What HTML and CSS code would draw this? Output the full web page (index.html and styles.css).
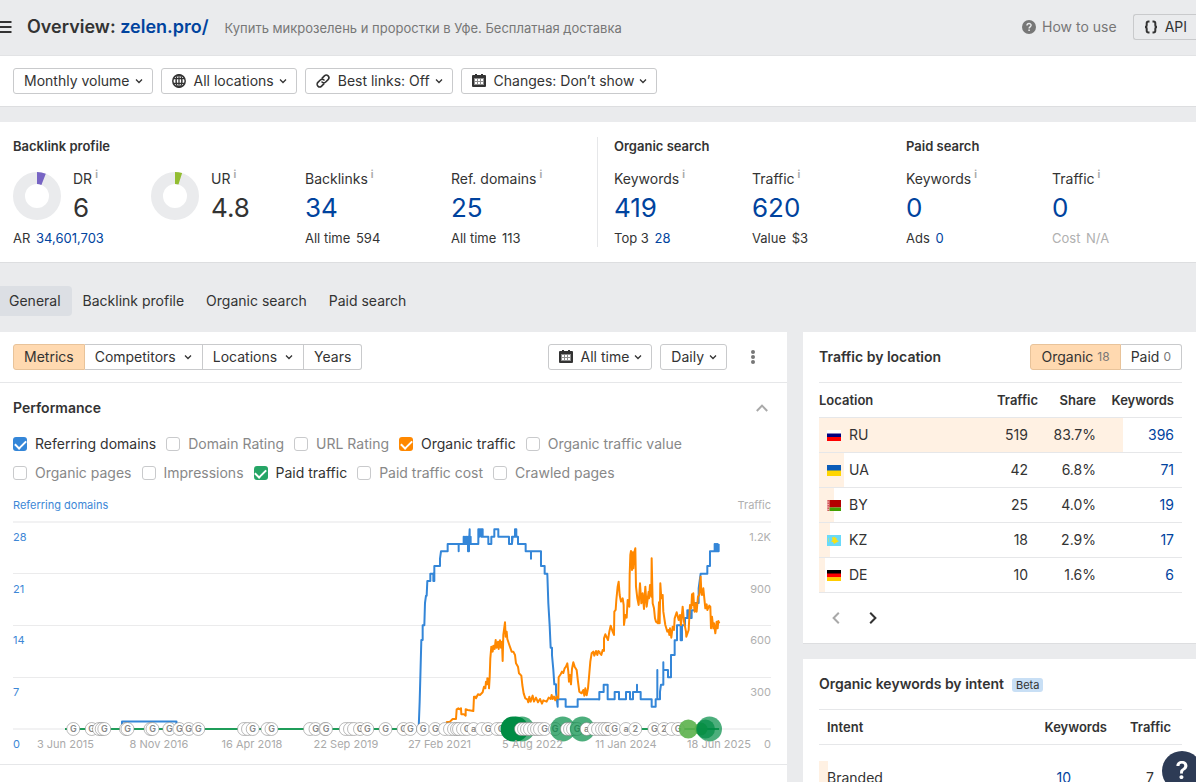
FILE: index.html
```html
<!DOCTYPE html>
<html lang="en">
<head>
<meta charset="utf-8">
<title>Overview: zelen.pro/</title>
<link rel="stylesheet" href="styles.css">
</head>
<body>
<svg class="sprite" aria-hidden="true">
  <symbol id="chev" viewBox="0 0 8 8"><path d="M1 2.5 4 5.5 7 2.5" fill="none" stroke="currentColor" stroke-width="1.3"/></symbol>
  <symbol id="calendar" viewBox="0 0 14 14"><path fill="currentColor" d="M3 0h2v1h4V0h2v1h2q1 0 1 1v10q0 1-1 1H1q-1 0-1-1V2q0-1 1-1h2z"/><path fill="#fff" d="M2 4h10v7H2z"/><path fill="currentColor" d="M2 4h10v7H2z" opacity=".55"/><path fill="#fff" d="M3 5h2v2H3zM6 5h2v2H6zM9 5h2v2H9zM3 8h2v2H3zM6 8h2v2H6zM9 8h2v2H9z"/></symbol>
</svg>

<header class="header">
  <button class="menu" aria-label="Menu"><svg width="12" height="14" viewBox="0 0 12 14"><path d="M0 2h11.500M0 7h11.500M0 12h11.500" stroke="currentColor" stroke-width="2"/></svg></button>
  <h1 class="title">Overview: <a href="#">zelen.pro/</a></h1>
  <p class="subtitle">Купить микрозелень и проростки в Уфе. Бесплатная доставка</p>
  <a class="howto" href="#"><svg width="14" height="14" viewBox="0 0 14 14"><circle cx="7" cy="7" r="7" fill="currentColor"/><path d="M5 5.500c0-2.700 4.100-2.600 4.100-.2C9.100 6.900 7.100 6.800 7.100 8.400" fill="none" stroke="#eaebed" stroke-width="1.400"/><path d="M6.300 9.600h1.600v1.500H6.300z" fill="#eaebed"/></svg>How to use</a>
  <button class="btn api"><svg width="16" height="14" viewBox="0 0 16 14"><path d="M6.500 1.500H5.500Q3.700 1.500 3.700 3.200V5Q3.700 7 2 7 3.700 7 3.700 9v1.800q0 1.700 1.800 1.700h1M9.500 1.500h1q1.800 0 1.800 1.700V5q0 2 1.700 2-1.700 0-1.700 2v1.800q0 1.700-1.800 1.700h-1" fill="none" stroke="currentColor" stroke-width="2"/></svg>API</button>
</header>

<div class="filters">
  <button class="btn">Monthly volume<svg class="chev"><use href="#chev"/></svg></button>
  <button class="btn"><svg class="icon" viewBox="0 0 14 14"><g fill="none" stroke="currentColor" stroke-width="1.500"><circle cx="7" cy="7" r="6.200"/><ellipse cx="7" cy="7" rx="2.900" ry="6.200"/><path d="M1 4.700h12M1 9.300h12M7 1v12" stroke-width="1.300"/></g></svg>All locations<svg class="chev"><use href="#chev"/></svg></button>
  <button class="btn"><svg class="icon" viewBox="0 0 14 14"><g fill="none" stroke="currentColor" stroke-width="1.600" stroke-linecap="round"><path d="M6.200 4.100 8.400 1.900a2.600 2.600 0 0 1 3.700 3.700L9.700 8a2.600 2.600 0 0 1-3.700 0"/><path d="M7.800 9.900 5.600 12.100a2.600 2.600 0 0 1-3.700-3.700L4.300 6A2.600 2.600 0 0 1 8 6"/></g></svg>Best links: Off<svg class="chev"><use href="#chev"/></svg></button>
  <button class="btn"><svg class="icon"><use href="#calendar"/></svg>Changes: Don’t show<svg class="chev"><use href="#chev"/></svg></button>
</div>

<section class="overview">
  <div class="group backlink">
    <h2>Backlink profile</h2>
    <div class="metrics">
      <div class="metric ring">
        <svg class="donut" viewBox="0 0 48 48"><circle cx="24" cy="24" r="18"/><path fill="#7764c4" d="M24 0A24 24 0 0 1 32.800 1.700L28.400 12.900A12 12 0 0 0 24 12z"/></svg>
        <div class="label">DR<span class="info">i</span></div><div class="value">6</div>
        <div class="sub">AR <a href="#">34,601,703</a></div>
      </div>
      <div class="metric ring">
        <svg class="donut" viewBox="0 0 48 48"><circle cx="24" cy="24" r="18"/><path fill="#93bd31" d="M24 0A24 24 0 0 1 31.100 1.100L27.500 12.600A12 12 0 0 0 24 12z"/></svg>
        <div class="label">UR<span class="info">i</span></div><div class="value">4.8</div>
      </div>
      <div class="metric"><div class="label">Backlinks<span class="info">i</span></div><a class="value" href="#">34</a><div class="sub">All time <span>594</span></div></div>
      <div class="metric"><div class="label">Ref. domains<span class="info">i</span></div><a class="value" href="#">25</a><div class="sub">All time <span>113</span></div></div>
    </div>
  </div>
  <div class="group organic">
    <h2>Organic search</h2>
    <div class="metrics">
      <div class="metric"><div class="label">Keywords<span class="info">i</span></div><a class="value" href="#">419</a><div class="sub">Top 3 <a href="#">28</a></div></div>
      <div class="metric"><div class="label">Traffic<span class="info">i</span></div><a class="value" href="#">620</a><div class="sub">Value <span>$3</span></div></div>
    </div>
  </div>
  <div class="group paid">
    <h2>Paid search</h2>
    <div class="metrics">
      <div class="metric"><div class="label">Keywords<span class="info">i</span></div><a class="value" href="#">0</a><div class="sub">Ads <a href="#">0</a></div></div>
      <div class="metric"><div class="label">Traffic<span class="info">i</span></div><a class="value" href="#">0</a><div class="sub muted">Cost <span>N/A</span></div></div>
    </div>
  </div>
</section>

<nav class="tabs">
  <a class="active" href="#">General</a><a href="#">Backlink profile</a><a href="#">Organic search</a><a href="#">Paid search</a>
</nav>

<main class="columns">
  <section class="panel">
    <div class="toolbar">
      <div class="segments">
        <button class="btn on">Metrics</button><button class="btn">Competitors<svg class="chev"><use href="#chev"/></svg></button><button class="btn">Locations<svg class="chev"><use href="#chev"/></svg></button><button class="btn">Years</button>
      </div>
      <div class="tools">
        <button class="btn"><svg class="icon"><use href="#calendar"/></svg>All time<svg class="chev"><use href="#chev"/></svg></button>
        <button class="btn">Daily<svg class="chev"><use href="#chev"/></svg></button>
        <button class="more" aria-label="More"><svg width="4" height="14" viewBox="0 0 4 14" fill="#777"><circle cx="2" cy="2" r="2"/><circle cx="2" cy="7" r="2"/><circle cx="2" cy="12" r="2"/></svg></button>
      </div>
    </div>
    <div class="performance">
      <div class="perf-head"><h3>Performance</h3><button class="collapse" aria-label="Collapse"><svg width="12" height="8" viewBox="0 0 12 8"><path d="M.8 7 6 1.600 11.200 7" fill="none" stroke="#a9a9a9" stroke-width="2"/></svg></button></div>
      <div class="checks">
        <label><input type="checkbox" class="blue" checked>Referring domains</label>
        <label><input type="checkbox">Domain Rating</label>
        <label><input type="checkbox">URL Rating</label>
        <label><input type="checkbox" class="orange" checked>Organic traffic</label>
        <label><input type="checkbox">Organic traffic value</label>
      </div>
      <div class="checks">
        <label><input type="checkbox">Organic pages</label>
        <label><input type="checkbox">Impressions</label>
        <label><input type="checkbox" class="green" checked>Paid traffic</label>
        <label><input type="checkbox">Paid traffic cost</label>
        <label><input type="checkbox">Crawled pages</label>
      </div>
      <div class="axis-titles"><span class="blue-text">Referring domains</span><span>Traffic</span></div>
      <svg class="chart" viewBox="13 515 758 237">
        <g class="grid"><path class="edge" d="M13 522H771M13 729H771"/><path d="M13 573.500H771M13 625.500H771M13 677.500H771"/></g>
        <g class="ylabels-left"><text x="13" y="541">28</text><text x="13" y="593">21</text><text x="13" y="644">14</text><text x="13" y="696">7</text><text x="13" y="748">0</text></g>
        <g class="ylabels-right"><text x="771" y="541">1.2K</text><text x="771" y="593">900</text><text x="771" y="644">600</text><text x="771" y="696">300</text><text x="771" y="748">0</text></g>
        <path class="line blue-line" d="M122 729V721.500H176.500V729"/>
        <g transform="translate(400 515) scale(.3333)">
          <path class="line blue-line" d="M56 640 59 560 61 488 64 375H68V331H73L75 264 78 242H80L82 198H91V176H100V198H103V153H120V131L123 109H143V87H176V109 87H191V65V87H195V65 87H199V65 87H204V65 109H207V87L209 43V87H212V65V87H235V43H238V65L241 43 244 65V43H248V65H265V87H274V65H283V43H295V65H327V87H336V65 87L338 65H345V43H349V65H354V87H377V109H393V131 109H423V153H434V176H442L445 264 449 331 452 398H456V420L460 464 463 508H468V530L473 575V553H497V575H533V553H600"/>
          <path class="line orange-line" d="M138 622 150 620 158 612H168L170 583 175 580 180 583 183 580 184 598H192L197 602V583L203 585 220 588 222 545H228V550L234 538 240 540 248 532 252 515 256 520 258 500 262 508V490L267 492V520L269 488 271 430 274 395 278 410 280 392 284 402 287 375 290 398 294 380 296 402 300 376 303 398 306 380 308 438 310 360 312 345 315 322 317 365 320 350 322 372 328 390 335 410 340 410 345 420 348 445 354 455 357 475 364 482 367 510 371 535 376 550 382 553 385 562 388 545 392 560 398 542 402 560 408 548 414 562 420 552 426 566 430 556 440 560 446 548 452 552 455 540 458 552 462 545 466 556 470 545 475 550 476 487 482 478 486 470 490 474 494 460 498 455 502 445 505 470 507 500 510 480 513 508 516 462 520 442 524 455 530 465 534 500 538 530 545 535 550 525 553 542 556 520 560 541 564 520 567 487 571 440 575 415 580 410 583 422 588 408 592 420 595 408 600 412"/>
        </g>
        <g transform="translate(580 515) scale(.3333)">
          <path class="line blue-line" d="M55 553H58V531H71V509H83V553H104V531H117V553H138V531H150V553H159V531H171V509 531H182V553H215V575H227V553H232V465 553H240V531L243 509H250V442 465H264V487H273V420H284V376H291V331H302V376 331 376H306V331H315V309H322V286 309L325 286V309L328 286V309L331 286V309H335V286H345V264H356V220L362 176H382V153H390V109H404V87 109H407V87 109H410V87 109H413V87 109H416V87"/>
          <path class="line orange-line" d="M58 412 64 420 68 405 72 408V370L76 358 84 375 88 350 92 332 98 350 102 360 103 290 107 285 109 255 113 215 116 200 119 240 123 260 128 250 131 270 132 330 136 300 140 308 143 255 148 275 149 180 151 120 153 108 156 165 158 112 160 160 163 112 166 100 168 215 172 250 176 270 180 205 184 265 188 235 192 282 196 215 200 275 206 230 207 250 210 210 214 245 215 130 218 265 222 280 225 310 228 320 234 325 237 262 239 325 241 205 244 250 248 240 250 290 256 330 262 350 266 345 268 360 270 340 274 368 278 335 282 345 284 310 290 292 296 315 300 300 303 330 308 275 312 320 318 350 319 365 326 345 330 270 334 280 336 238 338 270 340 235 342 270 344 290 346 265 350 290 354 245 358 240 362 185 364 230 366 240 370 220 376 280 380 268 382 285 388 272 391 275 393 340 396 305 400 340 402 325 406 355 410 320 413 340 415 318 418 325"/>
        </g>
        <path class="line green-line" d="M65 729H719"/>
        <g id="markers"></g>
        <g class="xlabels"><text x="65.500" y="748">3 Jun 2015</text><text x="159" y="748">8 Nov 2016</text><text x="252" y="748">16 Apr 2018</text><text x="346" y="748">22 Sep 2019</text><text x="439.500" y="748">27 Feb 2021</text><text x="532.500" y="748">5 Aug 2022</text><text x="626" y="748">11 Jan 2024</text><text x="719" y="748">18 Jun 2025</text></g>
      </svg>
    </div>
  </section>

  <aside class="side">
    <section class="card">
      <div class="card-head"><h3>Traffic by location</h3>
        <div class="segments"><button class="btn on">Organic <span class="count">18</span></button><button class="btn">Paid <span class="count">0</span></button></div>
      </div>
      <table class="locations">
        <thead><tr><th>Location</th><th>Traffic</th><th>Share</th><th>Keywords</th></tr></thead>
        <tbody>
          <tr style="--share:83.7%"><td><svg class="flag" viewBox="0 0 14 11"><path fill="#fff" d="M0 0h14v4H0z"/><path fill="#00007f" d="M0 3.500h14v4H0z"/><path fill="#f00" d="M0 7h14v4H0z"/></svg>RU</td><td>519</td><td>83.7%</td><td><a href="#">396</a></td></tr>
          <tr style="--share:6.8%"><td><svg class="flag" viewBox="0 0 14 11"><path fill="#0b5cb8" d="M0 0h14v6H0z"/><path fill="#ffd500" d="M0 5.500h14V11H0z"/></svg>UA</td><td>42</td><td>6.8%</td><td><a href="#">71</a></td></tr>
          <tr style="--share:4%"><td><svg class="flag" viewBox="0 0 14 11"><path fill="#b30000" d="M0 0h14v7.500H0z"/><path fill="#429f00" d="M0 7.500h14V11H0z"/><path fill="#f0b0b0" d="M0 0h2.500v11H0z"/><path d="M1.200 0v11" stroke="#c23434" stroke-dasharray="1.500 1"/></svg>BY</td><td>25</td><td>4.0%</td><td><a href="#">19</a></td></tr>
          <tr style="--share:2.9%"><td><svg class="flag" viewBox="0 0 14 11"><path fill="#69dafa" d="M0 0h14v11H0z"/><path fill="#f7e017" d="m5 2 1.500.5L8 1.500 8.500 3l1.500.500L9.500 5l2.500 1-2.500 1.500L7 9 6 7 4 6.500 5.500 5z"/><path d="M1.500 3.500v4" stroke="#d8e74d" stroke-dasharray="1 1"/></svg>KZ</td><td>18</td><td>2.9%</td><td><a href="#">17</a></td></tr>
          <tr style="--share:1.6%"><td><svg class="flag" viewBox="0 0 14 11"><path d="M0 0h14v4H0z"/><path fill="#f00" d="M0 3.500h14v4H0z"/><path fill="#fc0" d="M0 7.200h14V11H0z"/></svg>DE</td><td>10</td><td>1.6%</td><td><a href="#">6</a></td></tr>
        </tbody>
      </table>
      <div class="pager">
        <button aria-label="Previous" disabled><svg width="8" height="12" viewBox="0 0 8 12"><path d="M6.800.8 1.600 6l5.200 5.200" fill="none" stroke="currentColor" stroke-width="2"/></svg></button>
        <button aria-label="Next"><svg width="8" height="12" viewBox="0 0 8 12"><path d="M1.200.8 6.400 6l-5.200 5.200" fill="none" stroke="currentColor" stroke-width="2"/></svg></button>
      </div>
    </section>
    <section class="card">
      <div class="card-head"><h3>Organic keywords by intent<span class="beta">Beta</span></h3></div>
      <table class="intent">
        <thead><tr><th>Intent</th><th>Keywords</th><th>Traffic</th></tr></thead>
        <tbody>
          <tr class="spacer"><td colspan="3"></td></tr>
          <tr style="--share:9px"><td>Branded</td><td><a href="#">10</a></td><td>7</td></tr>
        </tbody>
      </table>
    </section>
  </aside>
</main>

<button class="help" aria-label="Help">?</button>
<script src="chart.js"></script>
</body>
</html>
```

FILE: styles.css
```css
* { box-sizing: border-box; }
html { height: 100%; overflow: hidden; }
body {
  margin: 0;
  height: 100%;
  overflow: hidden;
  background: #eaebed;
  color: #333;
  font: 14px/20px Inter, "Liberation Sans", sans-serif;
}
h1, h2, h3, p { margin: 0; }
a { color: #00439e; text-decoration: none; }
button { font: inherit; color: inherit; cursor: pointer; }
svg { flex: none; }
.sprite { position: absolute; width: 0; height: 0; }

.header { display: flex; align-items: center; height: 55px; padding-bottom: 2px; }
.menu { display: flex; padding: 0; margin: 0 15px 0 0; border: 0; background: none; }
.title { font-size: 18px; line-height: 24px; font-weight: 600; }
.subtitle { margin-left: 16px; padding-top: 3px; font-size: 13px; color: #777; }
.howto { display: flex; align-items: center; gap: 6px; margin-left: auto; color: #777; }

.btn {
  display: flex;
  align-items: center;
  height: 26px;
  padding: 0 10px;
  border: 1px solid #c9cacc;
  border-radius: 3px;
  background: #fff;
  white-space: nowrap;
}
.icon { width: 14px; height: 14px; margin-right: 8px; }
.chev { width: 8px; height: 8px; margin-left: 5px; }
.filters .btn, .tools .btn { padding-right: 9px; }
.api { gap: 6px; margin-left: 16px; padding: 0 9px; border-right: 0; border-radius: 3px 0 0 3px; background: none; }

.filters {
  display: flex;
  gap: 8px;
  padding: 12px 13px;
  background: #fff;
  border-top: 1px solid #e2e3e5;
  border-bottom: 1px solid #dddee0;
}

.overview {
  display: grid;
  grid-template-columns: 585fr 308fr 290fr;
  margin-top: 15px;
  padding: 15px 0 15px 13px;
  background: #fff;
  border-bottom: 1px solid #dddee0;
}
.backlink { border-right: 1px solid #e6e7e9; }
.organic { padding-left: 16px; }
h2 { margin-bottom: 14px; font-size: 13px; line-height: 18px; font-weight: 600; }
.metrics { display: grid; grid-template-columns: 138fr 154fr; }
.backlink .metrics { grid-template-columns: 138fr 154fr 146fr 146fr; }
.paid .metrics { grid-template-columns: 146fr 144fr; }
.ring { display: grid; grid-template-columns: 48px 1fr; column-gap: 12px; align-content: start; }
.donut { grid-row: 1 / 3; width: 48px; height: 48px; margin-top: 3px; }
.donut circle { fill: none; stroke: #eaebed; stroke-width: 12; }
.label { display: flex; }
.info { margin-left: 3px; font-size: 10px; line-height: 11px; font-weight: 700; color: #aaa; }
.value { display: block; font-size: 26px; line-height: 38px; }
.sub { margin-top: 2px; font-size: 13px; line-height: 18px; }
.sub > * { margin-left: 2px; }
.ring .sub { grid-column: 1 / 3; }
.muted { color: #b0b0b0; }

.tabs { display: flex; margin: 23px 0 16px; }
.tabs a { padding: 5px 11px; color: #333; }
.tabs .active { padding-left: 9px; background: #dcdfe4; border-radius: 0 4px 4px 0; }

.columns { display: grid; grid-template-columns: minmax(0, 1fr) 393px; gap: 16px; }
.panel { background: #fff; min-height: 480px; }
.toolbar {
  display: flex;
  justify-content: space-between;
  padding: 12px 32px 12px 13px;
  border-bottom: 1px solid #e6e7e9;
}
.segments, .tools { display: flex; }
.tools { gap: 8px; }
.segments .btn { border-radius: 0; }
.segments .btn + .btn { border-left: 0; }
.segments .btn:first-child { border-radius: 3px 0 0 3px; }
.segments .btn:last-child { border-radius: 0 3px 3px 0; }
.segments .on { background: #ffd9b0; border-color: #e8c39a; }
.segments .chev { margin-left: 8px; }
.more { display: flex; align-items: center; margin-left: 16px; padding: 0; border: 0; background: none; }
.count { margin-left: 4px; font-size: 12px; color: #777; }

.performance { padding: 15px 16px 12px 13px; border-bottom: 1px solid #e6e7e9; }
.perf-head { display: flex; justify-content: space-between; align-items: center; margin-bottom: 16px; }
h3 { font-size: 14px; line-height: 20px; font-weight: 600; }
.collapse { display: flex; padding: 0 3px; border: 0; background: none; }
.checks { display: flex; flex-wrap: wrap; gap: 0 10px; margin-bottom: 9px; }
.checks label { display: flex; align-items: center; gap: 8px; color: #888; }
.checks label:has(:checked) { color: #333; }
.checks input {
  appearance: none;
  width: 14px;
  height: 14px;
  margin: 0;
  border: 1px solid #c9cacc;
  border-radius: 3px;
  background: #fff;
}
.checks input:checked { display: flex; justify-content: center; padding-top: 3px; border: 0; }
.checks input:checked::before {
  content: "";
  width: 9px;
  height: 5px;
  border: solid #fff;
  border-width: 0 0 2px 2px;
  transform: rotate(-45deg);
}
.checks .blue { background: #3486d8; }
.checks .orange { background: #ff8800; }
.checks .green { background: #26a566; }
.axis-titles { display: flex; justify-content: space-between; margin-top: 12px; font-size: 11px; line-height: 20px; color: #b0b0b0; }
.blue-text { color: #3d87d6; }

.chart { display: block; width: 100%; height: auto; overflow: visible; }
.chart text { font-size: 11px; }
.grid path { stroke: #ebebec; stroke-width: 1; }
.grid .edge { stroke: #f2f2f3; stroke-width: 2; }
.ylabels-left { fill: #3d87d6; }
.ylabels-right { fill: #b0b0b0; text-anchor: end; }
.xlabels { fill: #aaa; text-anchor: middle; }
.line { fill: none; stroke-width: 2; vector-effect: non-scaling-stroke; stroke-linejoin: round; }
.blue-line { stroke: #3486d8; }
.orange-line { stroke: #ff8800; }
.green-line { stroke: #1f9d59; }
.update circle { fill: #fff; stroke: #777; stroke-opacity: .5; stroke-width: 1; }
.chart .update text { fill: #888; font-size: 9px; font-weight: 600; text-anchor: middle; }
.core { fill: #008c44; opacity: .7; }
.core.solid { opacity: 1; }
.core.light { fill: #5bb14b; opacity: .9; }

.side { display: flex; flex-direction: column; gap: 15px; }
.card { padding: 12px 14px 12px 16px; background: #fff; border-bottom: 1px solid #dddee0; }
.card-head { display: flex; align-items: center; justify-content: space-between; height: 26px; margin-bottom: 12px; }
.beta { margin-left: 8px; padding: 0 4px; border-radius: 3px; background: #c8dff5; font-size: 11px; line-height: 14px; font-weight: 400; display: inline-block; }
table { width: 100%; border-collapse: collapse; table-layout: fixed; border-top: 1px solid #e6e7e9; }
th, td { height: 35px; padding: 0; text-align: right; border-bottom: 1px solid #e6e7e9; }
th { font-size: 13px; font-weight: 600; }
th:first-child, td:first-child { text-align: left; }
tbody tr { background: linear-gradient(to right, #fff1e3 var(--share), transparent 0); }
.locations th:nth-child(2) { width: 60px; }
.locations th:nth-child(3) { width: 58px; }
.locations th:nth-child(4) { width: 86px; }
.locations td:first-child { padding-left: 8px; }
.locations td:nth-child(2) { padding-right: 10px; }
.locations th:last-child, .locations td:last-child { padding-right: 8px; }
.flag { display: inline-block; width: 14px; height: 11px; margin-right: 8px; vertical-align: -1px; }
.pager { display: flex; gap: 29px; padding: 19px 13px 7px; }
.pager button { display: flex; padding: 0; border: 0; background: none; }
.pager button:disabled { color: #a9a9a9; }
.intent th:first-child, .intent td:first-child { padding-left: 8px; }
.intent th:nth-child(2) { width: 90px; }
.intent th:nth-child(3) { width: 75px; }
.intent th:last-child { padding-right: 11px; }
.intent td:nth-child(2) { padding-right: 36px; }
.intent td:last-child { padding-right: 28px; }
.intent td { border: 0; }
.intent .spacer { background: none; }
.intent .spacer td { height: 16px; }

.help {
  position: fixed;
  right: -6px;
  bottom: -9px;
  width: 40px;
  height: 40px;
  padding: 0;
  border: 0;
  border-radius: 50%;
  background: #2d3b55;
  color: #fff;
  font-size: 24px;
  font-weight: 600;
}
```

FILE: chart.js
```js
// Search update markers along the time axis: [x, letter] or [x, kind, radius].
const markers = [
  [73.3, "G"], [91.7, "G"], [99, "G"], [101.7, "G"], [104.3, "G"], [126, "G"], [127.5, "G"],
  [150.5, "G"], [152.5, "G"], [169.3, "G"], [179.3, "G"], [188.7, "G"], [198.3, "G"],
  [244, "G"], [248, "G"], [252.7, "G"], [267.5, "G"], [271.5, "G"], [310, "G"], [315.5, "G"],
  [325, "G"], [326, "G"], [345.7, "G"], [350, "G"], [354, "G"], [360, "G"], [367.3, "G"],
  [385.5, "G"], [403.5, "G"], [410.3, "G"], [423, "G"], [435.3, "G"], [445, "G"], [450, "G"],
  [454, "G"], [457, "G"], [459, "G"], [463, "G"], [467, "G"], [473.5, "a"], [482, "G"], [488, "G"],
  [497, "G"], [501, "G"], [522, "core", 12.5], [513, "core solid", 12.5], [516, "core solid", 12.5],
  [521, "G"], [524, "G"], [527, "G"], [530, "G"], [534, "G"], [537, "G"], [540, "G"], [544.5, "G"], [555, "G"],
  [562.7, "core", 12.5], [567, "G"], [570, "G"], [573, "G"], [577, "G"], [582.3, "core", 12.5],
  [586.7, "a"], [594, "G"], [598, "G"], [602, "G"], [605, "G"], [608, "G"], [614.7, "G"],
  [626, "a"], [635.3, "2"], [654.3, "G"], [664, "2"], [671.7, "a"], [678, "G"],
  [688.3, "core light", 9.5], [701, "core light", 6.5], [705.5, "core", 9.5], [709.5, "core", 12.5]
];
const ns = "http://www.w3.org/2000/svg";
const layer = document.getElementById("markers");
const add = (parent, tag, attrs) => {
  const el = document.createElementNS(ns, tag);
  for (const key in attrs) el.setAttribute(key, attrs[key]);
  return parent.appendChild(el);
};
markers.forEach(([x, kind, r], i) => {
  if (r) {
    add(layer, "circle", { class: kind, cx: x, cy: 729, r });
    return;
  }
  const g = add(layer, "g", { class: "update" });
  add(g, "circle", { cx: x, cy: 729, r: 6.5 });
  // A letter is drawn only where the next marker leaves room for it.
  const next = markers[i + 1];
  const crowded = next && !next[2] && next[0] - x < 6.5;
  if (!crowded) add(g, "text", { x, y: 732 }).textContent = kind;
});
```
